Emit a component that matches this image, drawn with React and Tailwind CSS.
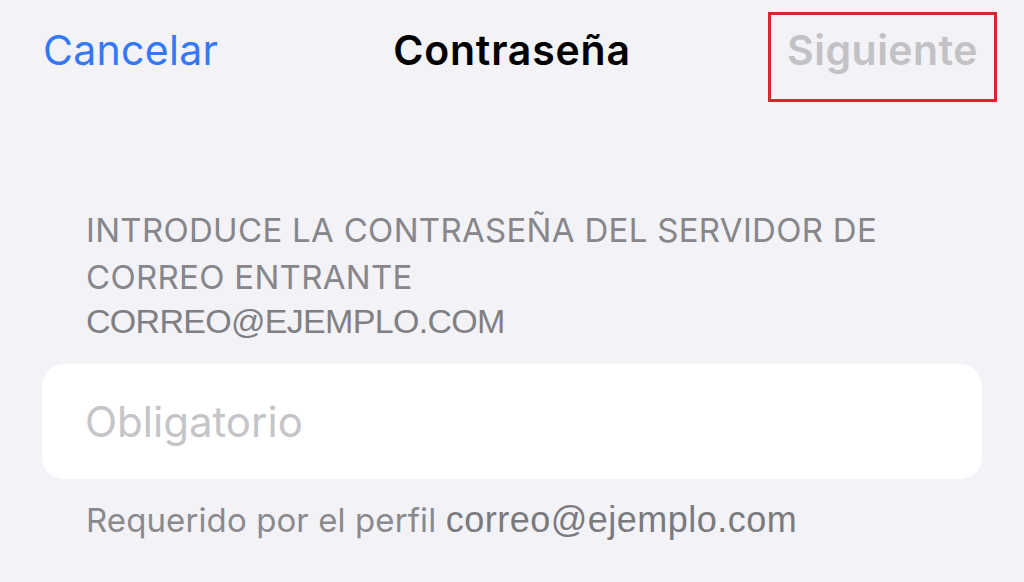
export default function App() {
  return (
    <div className="w-[1024px] h-[582px] bg-[#f2f2f7] overflow-hidden font-['Inter',sans-serif]">
      {/* Nav bar */}
      <div className="grid grid-cols-[1fr_auto_1fr] items-start pt-[12px]">
        <button
          type="button"
          className="justify-self-start ml-[43px] mt-[13px] text-[41px] leading-[50px] tracking-[0.3px] text-[#3478f6]"
        >
          Cancelar
        </button>
        <h1 className="mt-[13px] text-[41px] leading-[50px] font-semibold tracking-[0.8px] text-black">
          Contraseña
        </h1>
        <div className="justify-self-end mr-[27px] w-[229px] h-[90px] border-[3px] border-[#d9252e] flex justify-center pt-[10px]">
          <span className="text-[41px] leading-[50px] font-semibold tracking-[0.5px] text-[#c2c2c6]">
            Siguiente
          </span>
        </div>
      </div>

      {/* Section header */}
      <div className="mt-[105px] px-[86px] text-[#86868b]">
        <p className="text-[33px] leading-[47px] tracking-[0.3px]">
          INTRODUCE LA CONTRASEÑA DEL SERVIDOR DE
          <br />
          CORREO ENTRANTE
        </p>
        <p className="font-['Liberation_Sans',Arial,sans-serif] text-[34px] leading-[40px] tracking-[-0.7px] text-[#7f7f84]">
          CORREO@EJEMPLO.COM
        </p>
      </div>

      {/* Field */}
      <div className="mt-[23px] mx-[42px] h-[115px] bg-white rounded-[22px] flex items-center pl-[43px]">
        <input
          type="password"
          placeholder="Obligatorio"
          className="w-full bg-transparent outline-none text-[42px] leading-[52px] placeholder:text-[#c5c5c8]"
        />
      </div>

      {/* Footer */}
      <p className="mt-[21px] px-[86px] text-[33px] leading-[40px] tracking-[0.1px] text-[#8a8a8e] whitespace-nowrap">
        Requerido por el perfil{' '}
        <span className="font-['Liberation_Sans',Arial,sans-serif] text-[36px] tracking-[0.5px] text-[#7a7a7f]">
          correo@ejemplo.com
        </span>
      </p>
    </div>
  );
}
